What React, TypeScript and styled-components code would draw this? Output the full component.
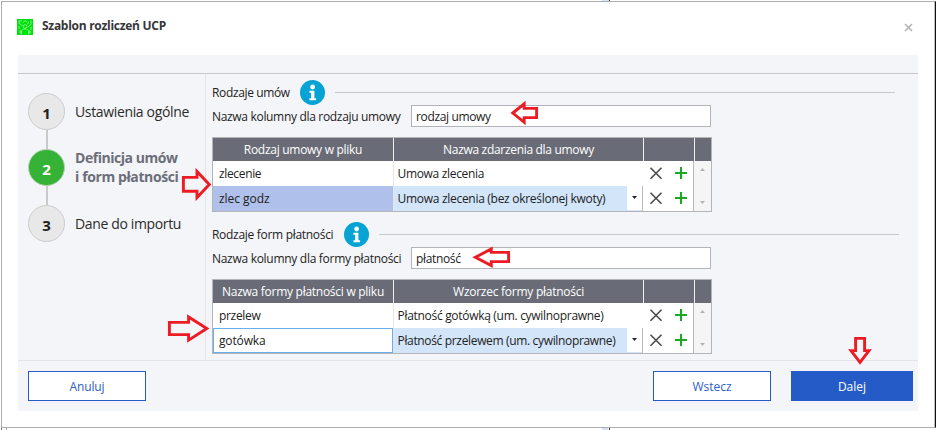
import React from 'react';
import styled, { createGlobalStyle } from 'styled-components';

const GlobalStyle = createGlobalStyle`
  *, *::before, *::after { box-sizing: border-box; }
  body { margin: 0; background: #fff; overflow: hidden; }
`;

const Screen = styled.div`
  position: relative;
  width: 940px;
  height: 430px;
  overflow: hidden;
  display: flex;
  flex-direction: column;
  background: #fff;
  color: #222;
  font: 400 12px/16px 'Open Sans', 'Noto Sans', sans-serif;
`;

const BackdropStrip = styled.div<{ $height: number }>`
  flex: none;
  display: flex;
  height: ${p => p.$height}px;
  padding-left: 1px;
`;

const StripPart = styled.div<{ $gap?: number; $width: number; $color: string }>`
  flex: none;
  margin-left: ${p => p.$gap ?? 0}px;
  width: ${p => p.$width}px;
  background: ${p => p.$color};
`;

const Dialog = styled.main`
  flex: none;
  display: flex;
  flex-direction: column;
  width: 935px;
  height: 427px;
  margin-left: 1px;
  border: 1px solid #adadad;
  border-right: 1px solid #111;
  box-shadow: inset -1px 0 #bdbdbd;
  background: #fff;
`;

const TitleBar = styled.header`
  flex: none;
  display: flex;
  align-items: center;
  height: 53px;
  padding: 0 22px 3px 15px;
`;

const Title = styled.h1`
  flex: 1;
  margin: 0 0 0 9px;
  padding-bottom: 2px;
  font: 700 12px/16px 'Open Sans', 'Noto Sans', sans-serif;
  letter-spacing: -0.28px;
  color: #36363b;
`;

const CloseIcon = styled.svg`
  display: block;
  width: 9px;
  height: 9px;
  margin-top: 1px;
  fill: none;
  stroke: #b4b4b4;
  stroke-width: 1.6;
`;

const Panel = styled.section`
  display: flex;
  flex-direction: column;
  width: 900px;
  height: 356px;
  margin-left: 16px;
  padding-top: 18px;
  background: #f4f5f8;
`;

const Body = styled.div`
  flex: none;
  display: flex;
  height: 288px;
  border-top: 1px solid #c9c9c9;
  border-bottom: 1px solid #e4e4e6;
`;

const Steps = styled.ol`
  width: 188px;
  margin: 0;
  padding: 19px 0 0 10px;
  display: flex;
  flex-direction: column;
  gap: 19px;
  list-style: none;
  border-right: 1px solid #e4e4e6;
`;

const Step = styled.li`
  position: relative;
  display: flex;
  align-items: center;
  height: 37px;
  &:not(:last-child)::after {
    content: '';
    position: absolute;
    left: 18px;
    top: 37px;
    width: 2px;
    height: 19px;
    background: #c9cac9;
  }
`;

const StepNumber = styled.span<{ $active?: boolean }>`
  flex: none;
  width: 37px;
  height: 37px;
  border: 1px solid ${p => (p.$active ? '#b4d4b4' : '#cbcccb')};
  border-radius: 50%;
  background: ${p => (p.$active ? '#36b336' : '#e8e8e8')};
  color: ${p => (p.$active ? '#fff' : '#222')};
  font-size: 15px;
  font-weight: 700;
  line-height: 38px;
  text-align: center;
`;

const StepLabel = styled.span<{ $active?: boolean; $ls: number }>`
  display: block;
  font-size: 14px;
  line-height: 19px;
  font-weight: ${p => (p.$active ? 700 : 400)};
  letter-spacing: ${p => p.$ls}px;
  color: ${p => (p.$active ? '#6b6e79' : '#2b2b2b')};
  white-space: nowrap;
`;

const StepText = styled.div`
  margin: -1px 0 0 10px;
`;

const Content = styled.div`
  flex: 1;
  display: flex;
  flex-direction: column;
  gap: 10px;
  padding: 6px 0 0 6px;
`;

const Group = styled.section`
  display: flex;
  flex-direction: column;
`;

const GroupHeader = styled.div<{ $end: number }>`
  display: flex;
  align-items: center;
  height: 25px;
  margin-right: ${p => p.$end}px;
`;

const Label = styled.span<{ $ls?: number; $width?: number }>`
  flex: none;
  width: ${p => (p.$width ? p.$width + 'px' : 'auto')};
  letter-spacing: ${p => p.$ls ?? 0}px;
  white-space: nowrap;
`;

const Rule = styled.span`
  flex: 1;
  height: 1px;
  margin-left: 10px;
  background: #c9c9c9;
`;

const InfoIcon = styled.svg`
  flex: none;
  width: 25px;
  height: 25px;
`;

const Field = styled.label`
  display: flex;
  align-items: center;
  height: 22px;
  line-height: 18px;
`;

const TextBox = styled.span<{ $ls: number }>`
  width: 300px;
  height: 22px;
  padding: 2px 0 0 4px;
  border: 1px solid #b2b4b9;
  background: #fff;
  letter-spacing: ${p => p.$ls}px;
`;

const FieldLabel = styled(Label)`
  padding-top: 2px;
`;

const Table = styled.div`
  width: 500px;
  height: 75px;
  margin-top: 10px;
  border: 1px solid #b4b5b8;
  background: #e6e6e8;
  display: flex;
  flex-direction: column;
  gap: 1px;
`;

const HeaderRow = styled.div`
  display: grid;
  grid-template-columns: 180px 249px 50px 16px;
  column-gap: 1px;
  height: 22px;
  background: #f0f0f0;
`;

const HeaderCell = styled.div<{ $ls?: number }>`
  background: #696c77;
  color: #fff;
  font-weight: 500;
  letter-spacing: ${p => p.$ls ?? 0}px;
  line-height: 23px;
  text-align: center;
  white-space: nowrap;
`;

const TableBody = styled.div`
  display: flex;
  height: 50px;
`;

const Rows = styled.div`
  flex: 1;
  display: grid;
  grid-template-rows: 24px 24px;
  gap: 1px;
`;

const Row = styled.div`
  display: grid;
  grid-template-columns: 181px 248px 51px;
`;

const tones = { plain: '#fff', focus: '#afc0eb', picked: '#d2e5f9' };

const Cell = styled.div<{ $ls?: number; $tone?: keyof typeof tones }>`
  padding-left: 6px;
  border-right: 1px solid #e6e6e8;
  background: ${p => tones[p.$tone ?? 'plain']};
  letter-spacing: ${p => p.$ls ?? 0}px;
  line-height: 25px;
  white-space: nowrap;
`;

const EditingCell = styled(Cell)`
  margin-right: 1px;
  padding-left: 5px;
  border: 1px solid #6aaeea;
  line-height: 23px;
`;

const EventCell = styled.div<{ $ls: number; $selected: boolean }>`
  display: flex;
  justify-content: space-between;
  padding-left: 3.5px;
  background: ${p => (p.$selected ? tones.picked : tones.plain)};
  letter-spacing: ${p => p.$ls}px;
  line-height: 25px;
  white-space: nowrap;
`;

const DropButton = styled.span`
  width: 15px;
  height: 24px;
  display: flex;
  align-items: center;
  justify-content: center;
  padding-bottom: 2px;
  background: #fff;
`;

const Actions = styled.div<{ $selected: boolean }>`
  display: flex;
  align-items: center;
  gap: 13px;
  padding: 0 0 0 7px;
  background: #fff;
  border-left: 1px solid ${p => (p.$selected ? '#b9b9bb' : '#fff')};
`;

const ActionIcon = styled.svg<{ $color: string; $weight: number }>`
  display: block;
  width: 12px;
  height: 12px;
  margin-bottom: 1px;
  overflow: visible;
  fill: none;
  stroke: ${p => p.$color};
  stroke-width: ${p => p.$weight};
`;

const ScrollBar = styled.div`
  width: 18px;
  display: flex;
  flex-direction: column;
  align-items: center;
  justify-content: space-between;
  padding: 7px 0 7px;
  border-left: 1px solid #b9b9bb;
  background: #f5f5f6;
`;

const Caret = styled.svg<{ $color: string }>`
  display: block;
  width: 5px;
  height: 3px;
  fill: ${p => p.$color};
`;

const Footer = styled.footer`
  display: flex;
  padding: 10px 5px 0 10px;
  gap: 20px;
`;

const Button = styled.button<{ $primary?: boolean; $left?: boolean; $ls?: number }>`
  width: ${p => (p.$primary ? 122 : 118)}px;
  height: 30px;
  margin: 0 ${p => (p.$left ? 'auto' : '0')} 0 0;
  padding: 2px 0 0;
  border: 1px solid #255bc7;
  background: ${p => (p.$primary ? '#255bc7' : '#fff')};
  color: ${p => (p.$primary ? '#fff' : '#2d60c8')};
  font: inherit;
  letter-spacing: ${p => p.$ls ?? 0}px;
`;

const Pointers = styled.svg`
  position: absolute;
  inset: 0;
  width: 940px;
  height: 430px;
  pointer-events: none;
  fill: none;
  stroke: #ed1c24;
  stroke-width: 2.9;
`;

function AppLogo() {
  return (
    <svg width="16" height="16" viewBox="0 0 16 16">
      <rect width="16" height="16" fill="#00e10b" />
      <g fill="none" stroke="#b4fab0" strokeWidth="0.7">
        <circle cx="8" cy="7.5" r="1.8" />
        <path d="M4.5 15.5v-3.7L6.7 10h2.8l2.2 1.8v3.7M4.5 12H3v2h1.5M11.7 12h1.5v2h-1.5M2 1.8h3M2 1.8v2.6l3.6 2.2M5.5 3.5 8.3 1.8l2 1M14 1.5v4l-3.2 2.4M12.2 2.4l-2 3M2 7v3M14 8v3" />
      </g>
    </svg>
  );
}

function Info() {
  return (
    <InfoIcon viewBox="0 0 25 25">
      <circle cx="12.5" cy="12.5" r="12.5" fill="#06a3d3" />
      <circle cx="12.6" cy="7" r="2.4" fill="#fff" />
      <path d="M9.4 10.8h5v7.5h1.7v2H9.4v-2h1.7v-5.5H9.4z" fill="#fff" />
    </InfoIcon>
  );
}

type Text = { text: string; ls: number };
type RowData = { name: Text; event: Text };

function MappingRow({ row, selected, editing }: { row: RowData; selected: boolean; editing: boolean }) {
  const NameCell = selected && editing ? EditingCell : Cell;
  return (
    <Row>
      <NameCell $ls={row.name.ls} $tone={selected && !editing ? 'focus' : 'plain'}>{row.name.text}</NameCell>
      <EventCell $ls={row.event.ls} $selected={selected}>
        {row.event.text}
        {selected && (
          <DropButton>
            <Caret $color="#222" viewBox="0 0 5 3"><path d="M0 0h5L2.5 3z" /></Caret>
          </DropButton>
        )}
      </EventCell>
      <Actions $selected={selected}>
        <ActionIcon $weight={1.6} $color="#4a4a4e" viewBox="0 0 12 12"><path d="M.5 .8 11.5 11.8M11.5 .8.5 11.8" /></ActionIcon>
        <ActionIcon $weight={2} $color="#1ba822" viewBox="0 0 12 12"><path d="M6 0v12M0 6h12" /></ActionIcon>
      </Actions>
    </Row>
  );
}

type GroupData = {
  title: Text;
  titleWidth: number;
  end: number;
  label: Text;
  value: Text;
  columns: Text[];
  rows: RowData[];
  editing: boolean;
};

const groups: GroupData[] = [
  {
    title: { text: 'Rodzaje umów', ls: -0.36 },
    titleWidth: 88,
    end: 23,
    label: { text: 'Nazwa kolumny dla rodzaju umowy', ls: -0.32 },
    value: { text: 'rodzaj umowy', ls: -0.36 },
    columns: [{ text: 'Rodzaj umowy w pliku', ls: -0.28 }, { text: 'Nazwa zdarzenia dla umowy', ls: -0.31 }],
    rows: [
      { name: { text: 'zlecenie', ls: -0.35 }, event: { text: 'Umowa zlecenia', ls: -0.32 } },
      { name: { text: 'zlec godz', ls: -0.05 }, event: { text: 'Umowa zlecenia (bez określonej kwoty)', ls: -0.29 } },
    ],
    editing: false,
  },
  {
    title: { text: 'Rodzaje form płatności', ls: -0.3 },
    titleWidth: 132,
    end: 19,
    label: { text: 'Nazwa kolumny dla formy płatności', ls: -0.29 },
    value: { text: 'płatność', ls: -0.34 },
    columns: [{ text: 'Nazwa formy płatności w pliku', ls: -0.27 }, { text: 'Wzorzec formy płatności', ls: -0.26 }],
    rows: [
      { name: { text: 'przelew', ls: -0.32 }, event: { text: 'Płatność gotówką (um. cywilnoprawne)', ls: -0.3 } },
      { name: { text: 'gotówka', ls: -0.15 }, event: { text: 'Płatność przelewem (um. cywilnoprawne)', ls: -0.34 } },
    ],
    editing: true,
  },
];

function MappingGroup({ data }: { data: GroupData }) {
  return (
    <Group>
      <GroupHeader $end={data.end}>
        <Label $ls={data.title.ls} $width={data.titleWidth}>{data.title.text}</Label>
        <Info />
        <Rule />
      </GroupHeader>
      <Field>
        <FieldLabel $ls={data.label.ls} $width={199}>{data.label.text}</FieldLabel>
        <TextBox $ls={data.value.ls}>{data.value.text}</TextBox>
      </Field>
      <Table>
        <HeaderRow>
          {data.columns.map(c => <HeaderCell key={c.text} $ls={c.ls}>{c.text}</HeaderCell>)}
          <HeaderCell />
          <HeaderCell />
        </HeaderRow>
        <TableBody>
          <Rows>
            {data.rows.map((row, i) => (
              <MappingRow key={row.name.text} row={row} selected={i === 1} editing={data.editing} />
            ))}
          </Rows>
          <ScrollBar>
            <Caret $color="#b5b5b8" viewBox="0 0 5 3"><path d="M0 3h5L2.5 0z" /></Caret>
            <Caret $color="#b5b5b8" viewBox="0 0 5 3"><path d="M0 0h5L2.5 3z" /></Caret>
          </ScrollBar>
        </TableBody>
      </Table>
    </Group>
  );
}

export default function App() {
  return (
    <Screen>
      <GlobalStyle />
      <BackdropStrip $height={1}>
        <StripPart $gap={601} $width={7} $color="#d5e2f5" />
        <StripPart $width={1} $color="#333" />
      </BackdropStrip>
      <Dialog>
        <TitleBar>
          <AppLogo />
          <Title>Szablon rozliczeń UCP</Title>
          <CloseIcon viewBox="0 0 9 9"><path d="M1 1l7 7M8 1 1 8" /></CloseIcon>
        </TitleBar>
        <Panel>
          <Body>
            <Steps>
              <Step>
                <StepNumber>1</StepNumber>
                <StepText><StepLabel $ls={-0.35}>Ustawienia ogólne</StepLabel></StepText>
              </Step>
              <Step>
                <StepNumber $active>2</StepNumber>
                <StepText>
                  <StepLabel $active $ls={-0.46}>Definicja umów</StepLabel>
                  <StepLabel $active $ls={-0.39}>i form płatności</StepLabel>
                </StepText>
              </Step>
              <Step>
                <StepNumber>3</StepNumber>
                <StepText><StepLabel $ls={-0.36}>Dane do importu</StepLabel></StepText>
              </Step>
            </Steps>
            <Content>
              {groups.map(g => <MappingGroup key={g.title.text} data={g} />)}
            </Content>
          </Body>
          <Footer>
            <Button $left $ls={-0.15}>Anuluj</Button>
            <Button>Wstecz</Button>
            <Button $primary>Dalej</Button>
          </Footer>
        </Panel>
      </Dialog>
      <BackdropStrip $height={2}>
        <StripPart $width={1} $color="#777" />
        <StripPart $gap={4} $width={1} $color="#aaa" />
        <StripPart $gap={595} $width={6} $color="#d5e2f5" />
        <StripPart $gap={1} $width={1} $color="#333" />
      </BackdropStrip>
      <Pointers viewBox="0 0 940 430">
        <path d="M512.8 113 524.2 103.8V108.4H536.6V117.6H524.2V122.3Z" />
        <path d="M183.4 177.4H197V171.4L209.3 184.6 197 197.6V191.3H183.4Z" />
        <path d="M475.4 257.3 491.3 249V252.4H508.6V261.6H491.3V265.5Z" />
        <path d="M169.4 322.4H188.6V317L206.8 328.5 188.6 340.2V334.6H169.4Z" />
        <path d="M855.6 338.4H864.6V350.6H869L860 362.3 851 350.6H855.6Z" />
      </Pointers>
    </Screen>
  );
}
